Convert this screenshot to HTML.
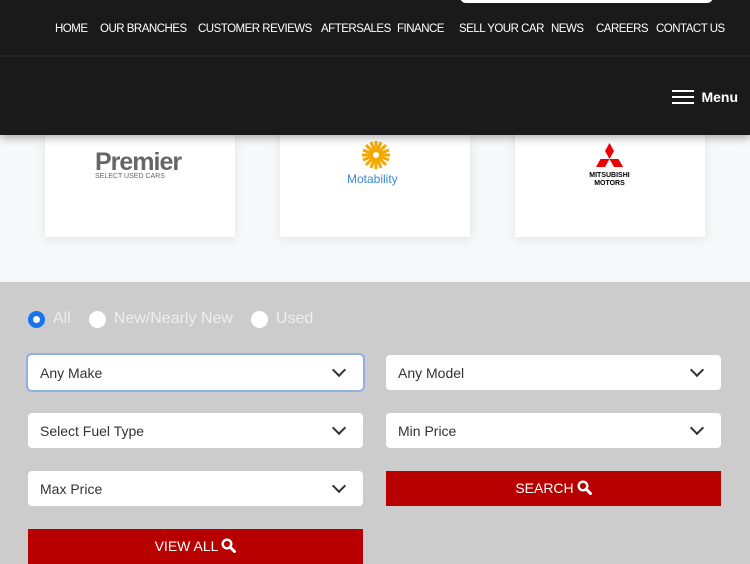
<!DOCTYPE html><html><head><style>
*{margin:0;padding:0;box-sizing:border-box}
body{width:750px;height:563px;overflow:hidden;font-family:"Liberation Sans",sans-serif;background:#ccc;position:relative}
.hdr{position:absolute;left:0;top:0;width:750px;height:135px;background:#1a1a1a;box-shadow:0 3px 8px rgba(0,0,0,.3);z-index:2}
.sb{position:absolute;left:460px;top:-10px;width:253px;height:13px;background:#fff;border-radius:6px}
.nav span{position:absolute;top:23px;color:#fff;font-size:11.5px;white-space:nowrap;letter-spacing:-.5px}
.line{position:absolute;top:55px;left:0;width:750px;height:2px;background:#262626}
.menu{position:absolute;right:12px;top:86px;color:#fff;font-weight:bold;font-size:14px;display:flex;align-items:center;gap:7px}
.bars span{display:block;width:22px;height:2px;background:#fff;margin:4px 0}
.light{position:absolute;top:0;left:0;width:750px;height:282px;background:#f7f8f9}
.card{position:absolute;top:120px;width:190px;height:117px;background:#fff;box-shadow:0 3px 10px rgba(0,0,0,.08)}
.radio{position:absolute;top:310px;left:28px;display:flex;align-items:center;color:#eee;font-size:16px}
.rc{width:17px;height:17px;border-radius:50%;background:#fff;display:inline-block;margin-right:8px}
.sel{position:absolute;height:35px;width:335px;background:#fff;border-radius:4px;font-size:14px;color:#333;padding:10px 12px}
.sel:after{content:"";position:absolute;right:19px;top:10px;width:8px;height:8px;border-right:2.5px solid #333;border-bottom:2.5px solid #333;transform:rotate(45deg)}
.btn{position:absolute;width:335px;height:35px;background:#b80000;color:#fff;font-size:14px;text-align:center;line-height:35px}
.btn svg{vertical-align:-2px;margin-left:3px}
</style></head><body>
<div class="light"></div>
<div class="card" style="left:45px"><div style="position:absolute;left:50px;top:28px;color:#666;font-weight:bold;font-size:25px;letter-spacing:-1px">Premier</div><div style="position:absolute;left:50px;top:53px;color:#666;font-size:7px">SELECT USED CARS</div></div>
<div class="card" style="left:280px"><svg style="position:absolute;left:81px;top:20px" width="30" height="30" viewBox="-15 -15 30 30"><g stroke="#f5a800" stroke-width="3"><line x1="0" y1="-14" x2="0" y2="14"/><line x1="-14" y1="0" x2="14" y2="0"/><line x1="-10" y1="-10" x2="10" y2="10"/><line x1="-10" y1="10" x2="10" y2="-10"/><line x1="-5" y1="-13" x2="5" y2="13"/><line x1="5" y1="-13" x2="-5" y2="13"/><line x1="-13" y1="-5" x2="13" y2="5"/><line x1="-13" y1="5" x2="13" y2="-5"/></g><circle r="3" fill="#fff"/></svg><div style="position:absolute;left:67px;top:52px;color:#3b87d6;font-size:12px">Motability</div></div>
<div class="card" style="left:515px"><div style="position:absolute;left:49px;top:23px;width:91px;height:45px;background:#fff"><svg width="91" height="45"><polygon points="45.5,0 50,8 45.5,16 41,8" fill="#e00"/><polygon points="41,16 45.5,16 41,24 32,24 36.5,16" fill="#e00"/><polygon points="45.5,16 50,16 54.5,16 59,24 50,24" fill="#e00"/><text x="45.5" y="34" font-size="7" font-weight="bold" text-anchor="middle" font-family="Liberation Sans">MITSUBISHI</text><text x="45.5" y="42" font-size="7" font-weight="bold" text-anchor="middle" font-family="Liberation Sans">MOTORS</text></svg></div></div>
<div class="hdr"><div class="sb"></div>
<div class="nav"><span style="left:55px">HOME</span><span style="left:100px">OUR BRANCHES</span><span style="left:198px">CUSTOMER REVIEWS</span><span style="left:321px">AFTERSALES</span><span style="left:397px">FINANCE</span><span style="left:459px">SELL YOUR CAR</span><span style="left:551px">NEWS</span><span style="left:596px">CAREERS</span><span style="left:656px">CONTACT US</span></div>
<div class="line"></div>
<div class="menu"><div class="bars"><span></span><span></span><span></span></div>Menu</div></div>
<div class="radio"><span class="rc" style="border:5px solid #1a73e8"></span><span style="margin-right:18px">All</span><span class="rc"></span><span style="margin-right:18px">New/Nearly New</span><span class="rc"></span><span>Used</span></div>
<div class="sel" style="left:28px;top:355px;box-shadow:0 0 0 2px #8fb0e0">Any Make</div>
<div class="sel" style="left:386px;top:355px">Any Model</div>
<div class="sel" style="left:28px;top:413px">Select Fuel Type</div>
<div class="sel" style="left:386px;top:413px">Min Price</div>
<div class="sel" style="left:28px;top:471px">Max Price</div>
<div class="btn" style="left:386px;top:471px">SEARCH<svg width="15" height="15" viewBox="0 0 15 15"><circle cx="6" cy="6" r="4.3" fill="none" stroke="#fff" stroke-width="2.4"/><line x1="9" y1="9" x2="13.5" y2="13.5" stroke="#fff" stroke-width="3" stroke-linecap="round"/></svg></div>
<div class="btn" style="left:28px;top:529px">VIEW ALL<svg width="15" height="15" viewBox="0 0 15 15"><circle cx="6" cy="6" r="4.3" fill="none" stroke="#fff" stroke-width="2.4"/><line x1="9" y1="9" x2="13.5" y2="13.5" stroke="#fff" stroke-width="3" stroke-linecap="round"/></svg></div>
</body></html>
